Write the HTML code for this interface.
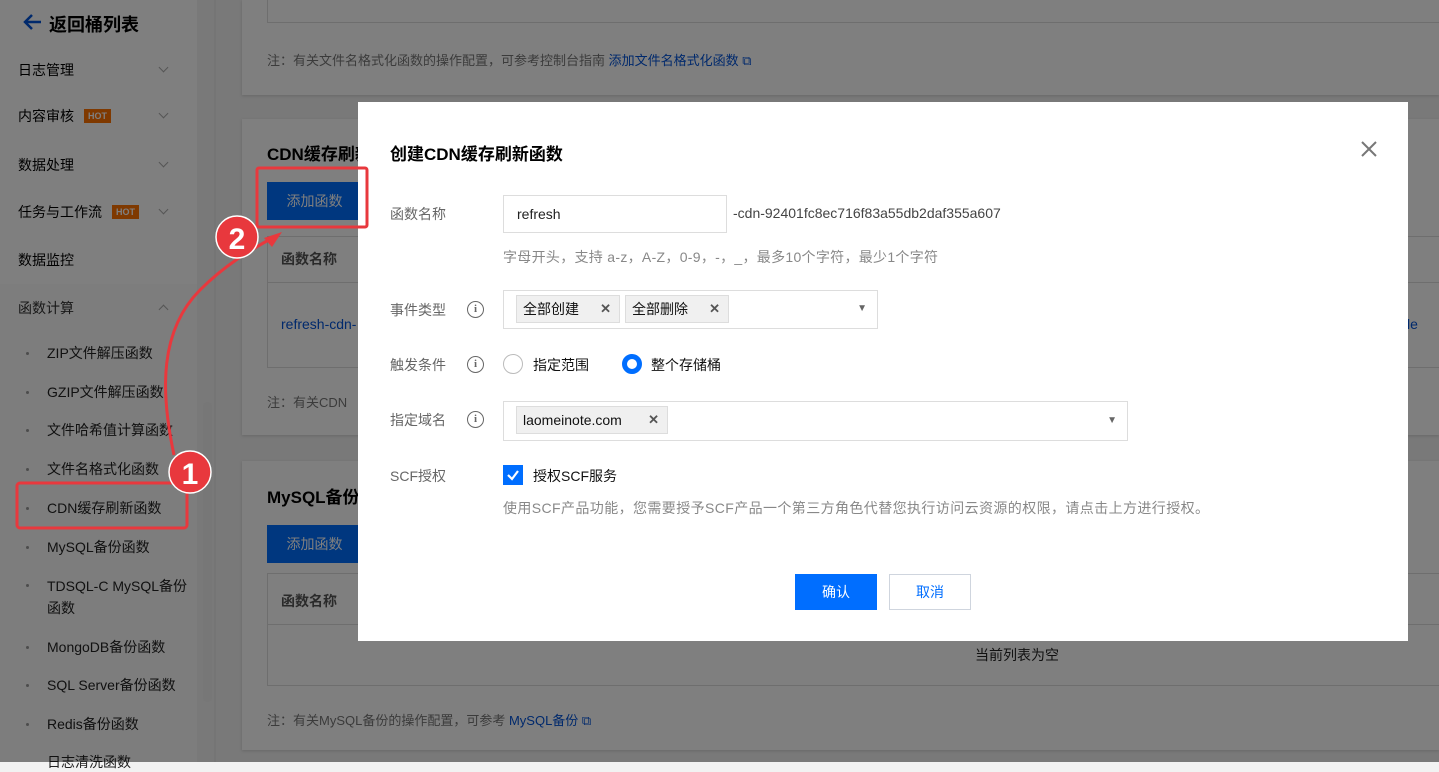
<!DOCTYPE html>
<html><head><meta charset="utf-8"><style>
*{margin:0;padding:0;box-sizing:border-box}
html,body{background:#f2f2f2}
body{width:1439px;height:762px;overflow:hidden;font-family:"Liberation Sans","Noto Sans CJK SC",sans-serif;position:relative;color:#000}
.a{position:absolute;white-space:nowrap}
.side{position:absolute;left:0;top:0;width:197px;height:762px;background:#fff}
.si{position:absolute;left:18px;font-size:14px;color:#000}
.sub{position:absolute;left:47px;font-size:14px;color:#222}
.dot{position:absolute;left:26px;width:3px;height:3px;background:#999;border-radius:50%}
.chev{position:absolute;left:160px;width:7px;height:7px;border-right:1.5px solid #aaa;border-bottom:1.5px solid #aaa;transform:rotate(45deg)}
.chev.up{transform:rotate(-135deg)}
.hot{display:inline-block;background:#ff7200;color:#fff;font-size:9px;font-weight:bold;padding:2px 4px;margin-left:10px;vertical-align:2px}
.card{position:absolute;left:242px;width:1197px;background:#fff;box-shadow:0 1px 3px rgba(0,0,0,.15)}
.btnd{position:absolute;background:#006eff;color:#fff;font-size:14px;text-align:center;line-height:38px}
.modal{position:absolute;left:358px;top:102px;width:1050px;height:539px;background:#fff}
.lab{position:absolute;left:32px;font-size:14px;color:#666}
.info{position:absolute;left:77px;top:1px;width:17px;height:17px;border:1.5px solid #666;border-radius:50%;font-size:11px;text-align:center;line-height:14px;color:#666;font-weight:bold;font-family:"Liberation Serif",serif}
.tag{position:absolute;top:4px;height:28px;background:#f0f0f0;border:1px solid #ddd;font-size:14px;line-height:26px;padding-left:6px;color:#111}
.x{position:absolute;right:8px;top:0;font-size:13px;color:#555;font-weight:bold}
</style></head><body>
<div class="side">
 <svg class="a" style="left:22px;top:13px" width="20" height="18"><path d="M19 9H3M10 2L3 9L10 16" stroke="#0052d9" stroke-width="2.5" fill="none"/></svg>
 <div class="a" style="left:49px;top:11px;font-size:18px;font-weight:bold;color:#000">返回桶列表</div>
 <div class="si" style="top:60px">日志管理</div><div class="chev" style="top:64px"></div>
 <div class="si" style="top:106px">内容审核<span class="hot">HOT</span></div><div class="chev" style="top:110px"></div>
 <div class="si" style="top:155px">数据处理</div><div class="chev" style="top:159px"></div>
 <div class="si" style="top:202px">任务与工作流<span class="hot">HOT</span></div><div class="chev" style="top:206px"></div>
 <div class="si" style="top:250px">数据监控</div>
 <div style="position:absolute;left:0;top:284px;width:197px;height:478px;background:#fafafa"></div>
 <div class="si" style="top:298px;color:#333">函数计算</div><div class="chev up" style="top:306px"></div>
 <div class="dot" style="top:352px"></div><div class="sub" style="top:343px">ZIP文件解压函数</div>
 <div class="dot" style="top:391px"></div><div class="sub" style="top:382px">GZIP文件解压函数</div>
 <div class="dot" style="top:429px"></div><div class="sub" style="top:420px">文件哈希值计算函数</div>
 <div class="dot" style="top:468px"></div><div class="sub" style="top:459px">文件名格式化函数</div>
 <div class="dot" style="top:507px"></div><div class="sub" style="top:498px">CDN缓存刷新函数</div>
 <div class="dot" style="top:546px"></div><div class="sub" style="top:537px">MySQL备份函数</div>
 <div class="dot" style="top:584px"></div><div class="sub" style="top:575px;line-height:22px">TDSQL-C MySQL备份<br>函数</div>
 <div class="dot" style="top:646px"></div><div class="sub" style="top:637px">MongoDB备份函数</div>
 <div class="dot" style="top:684px"></div><div class="sub" style="top:675px">SQL Server备份函数</div>
 <div class="dot" style="top:723px"></div><div class="sub" style="top:714px">Redis备份函数</div>
 <div class="sub" style="top:752px">日志清洗函数</div>
</div>
<div style="position:absolute;left:203px;top:402px;width:9px;height:300px;background:#eee;border-radius:4px"></div>
<div style="position:absolute;left:214px;top:0;width:2px;height:762px;background:#ebebeb"></div>

<div class="card" style="top:0;height:95px">
 <div style="position:absolute;left:25px;top:-1px;width:1180px;height:24px;border:1px solid #ddd"></div>
 <div class="a" style="left:25px;top:50px;font-size:13px;color:#777">注：有关文件名格式化函数的操作配置，可参考控制台指南 <span style="color:#0052d9">添加文件名格式化函数 ⧉</span></div>
</div>
<div class="card" style="top:119px;height:316px">
 <div class="a" style="left:25px;top:21px;font-size:17px;font-weight:bold;color:#000">CDN缓存刷新函数</div>
 <div class="btnd" style="left:25px;top:63px;width:95px">添加函数</div>
 <div style="position:absolute;left:25px;top:117px;width:1180px;height:132px;border:1px solid #ddd"></div>
 <div style="position:absolute;left:25px;top:163px;width:1180px;height:1px;background:#ddd"></div>
 <div class="a" style="left:39px;top:130px;font-size:14px;font-weight:bold;color:#555">函数名称</div>
 <div class="a" style="left:39px;top:197px;font-size:14px;color:#0052d9">refresh-cdn-</div>
 <div class="a" style="left:1165px;top:197px;font-size:14px;color:#0052d9">le</div>
 <div class="a" style="left:25px;top:273px;font-size:13px;color:#777">注：有关CDN</div>
</div>
<div class="card" style="top:461px;height:289px">
 <div class="a" style="left:25px;top:22px;font-size:17px;font-weight:bold;color:#000">MySQL备份</div>
 <div class="btnd" style="left:25px;top:64px;width:95px">添加函数</div>
 <div style="position:absolute;left:25px;top:112px;width:1180px;height:113px;border:1px solid #ddd"></div>
 <div style="position:absolute;left:25px;top:163px;width:1180px;height:1px;background:#ddd"></div>
 <div class="a" style="left:39px;top:130px;font-size:14px;font-weight:bold;color:#555">函数名称</div>
 <div class="a" style="left:733px;top:184px;font-size:14px;color:#222">当前列表为空</div>
 <div class="a" style="left:25px;top:249px;font-size:13px;color:#777">注：有关MySQL备份的操作配置，可参考 <span style="color:#0052d9">MySQL备份 ⧉</span></div>
</div>

<div style="position:absolute;left:0;top:0;width:1439px;height:762px;background:rgba(0,0,0,0.5)"></div>

<div class="modal">
 <div class="a" style="left:32px;top:38px;font-size:17px;font-weight:bold;color:#000">创建CDN缓存刷新函数</div>
 <svg class="a" style="left:1003px;top:39px" width="16" height="16"><path d="M1 1L15 15M15 1L1 15" stroke="#777" stroke-width="2"/></svg>
 <div class="lab" style="top:102px">函数名称</div>
 <div style="position:absolute;left:145px;top:93px;width:224px;height:38px;border:1px solid #ddd;font-size:14px;line-height:36px;padding-left:13px;color:#222">refresh</div>
 <div class="a" style="left:375px;top:103px;font-size:14px;color:#444">-cdn-92401fc8ec716f83a55db2daf355a607</div>
 <div class="a" style="left:145px;top:145px;font-size:14px;color:#888;letter-spacing:0.3px">字母开头，支持 a-z，A-Z，0-9，-，_，最多10个字符，最少1个字符</div>
 <div class="lab" style="top:198px">事件类型<span class="info">i</span></div>
 <div style="position:absolute;left:145px;top:188px;width:375px;height:39px;border:1px solid #ddd">
  <div class="tag" style="left:12px;width:104px">全部创建<span class="x">✕</span></div>
  <div class="tag" style="left:121px;width:104px">全部删除<span class="x">✕</span></div>
  <div class="a" style="right:10px;top:12px;font-size:10px;color:#666">▼</div>
 </div>
 <div class="lab" style="top:253px">触发条件<span class="info">i</span></div>
 <div style="position:absolute;left:145px;top:252px;width:20px;height:20px;border:1px solid #bbb;border-radius:50%"></div>
 <div class="a" style="left:175px;top:253px;font-size:14px;color:#111">指定范围</div>
 <div style="position:absolute;left:264px;top:252px;width:20px;height:20px;border:5px solid #006eff;border-radius:50%"></div>
 <div class="a" style="left:293px;top:253px;font-size:14px;color:#111">整个存储桶</div>
 <div class="lab" style="top:308px">指定域名<span class="info">i</span></div>
 <div style="position:absolute;left:145px;top:299px;width:625px;height:40px;border:1px solid #ddd">
  <div class="tag" style="left:12px;width:152px">laomeinote.com<span class="x">✕</span></div>
  <div class="a" style="right:10px;top:13px;font-size:10px;color:#666">▼</div>
 </div>
 <div class="lab" style="top:364px">SCF授权</div>
 <div style="position:absolute;left:145px;top:363px;width:20px;height:20px;background:#006eff"><svg width="20" height="20"><path d="M5 10L9 14L15 6" stroke="#fff" stroke-width="2.2" fill="none"/></svg></div>
 <div class="a" style="left:175px;top:364px;font-size:14px;color:#111">授权SCF服务</div>
 <div class="a" style="left:145px;top:396px;font-size:14px;color:#888;letter-spacing:0.4px">使用SCF产品功能，您需要授予SCF产品一个第三方角色代替您执行访问云资源的权限，请点击上方进行授权。</div>
 <div style="position:absolute;left:437px;top:472px;width:82px;height:36px;background:#006eff;color:#fff;font-size:14px;text-align:center;line-height:36px">确认</div>
 <div style="position:absolute;left:531px;top:472px;width:82px;height:36px;border:1px solid #cfd5de;color:#006eff;font-size:14px;text-align:center;line-height:34px">取消</div>
</div>

<svg class="a" style="left:0;top:0" width="1439" height="762">
 <rect x="17" y="483" width="170" height="45" rx="3" fill="none" stroke="#e8383d" stroke-width="3"/>
 <rect x="257" y="168" width="110" height="59" rx="2" fill="none" stroke="#e8383d" stroke-width="3"/>
 <path d="M174 455 C160 390 160 330 200 290 C225 265 250 250 276 236" fill="none" stroke="#e8383d" stroke-width="3"/>
 <path d="M282 232 L264 238 L272 247 Z" fill="#e8383d"/>
 <circle cx="190" cy="472" r="21" fill="#e8383d" stroke="#fff" stroke-width="1.5"/>
 <text x="190" y="484" text-anchor="middle" font-size="30" font-family="Liberation Sans" font-weight="bold" fill="#fff">1</text>
 <circle cx="237" cy="237" r="21" fill="#e8383d" stroke="#fff" stroke-width="1.5"/>
 <text x="237" y="249" text-anchor="middle" font-size="30" font-family="Liberation Sans" font-weight="bold" fill="#fff">2</text>
</svg>
</body></html>
